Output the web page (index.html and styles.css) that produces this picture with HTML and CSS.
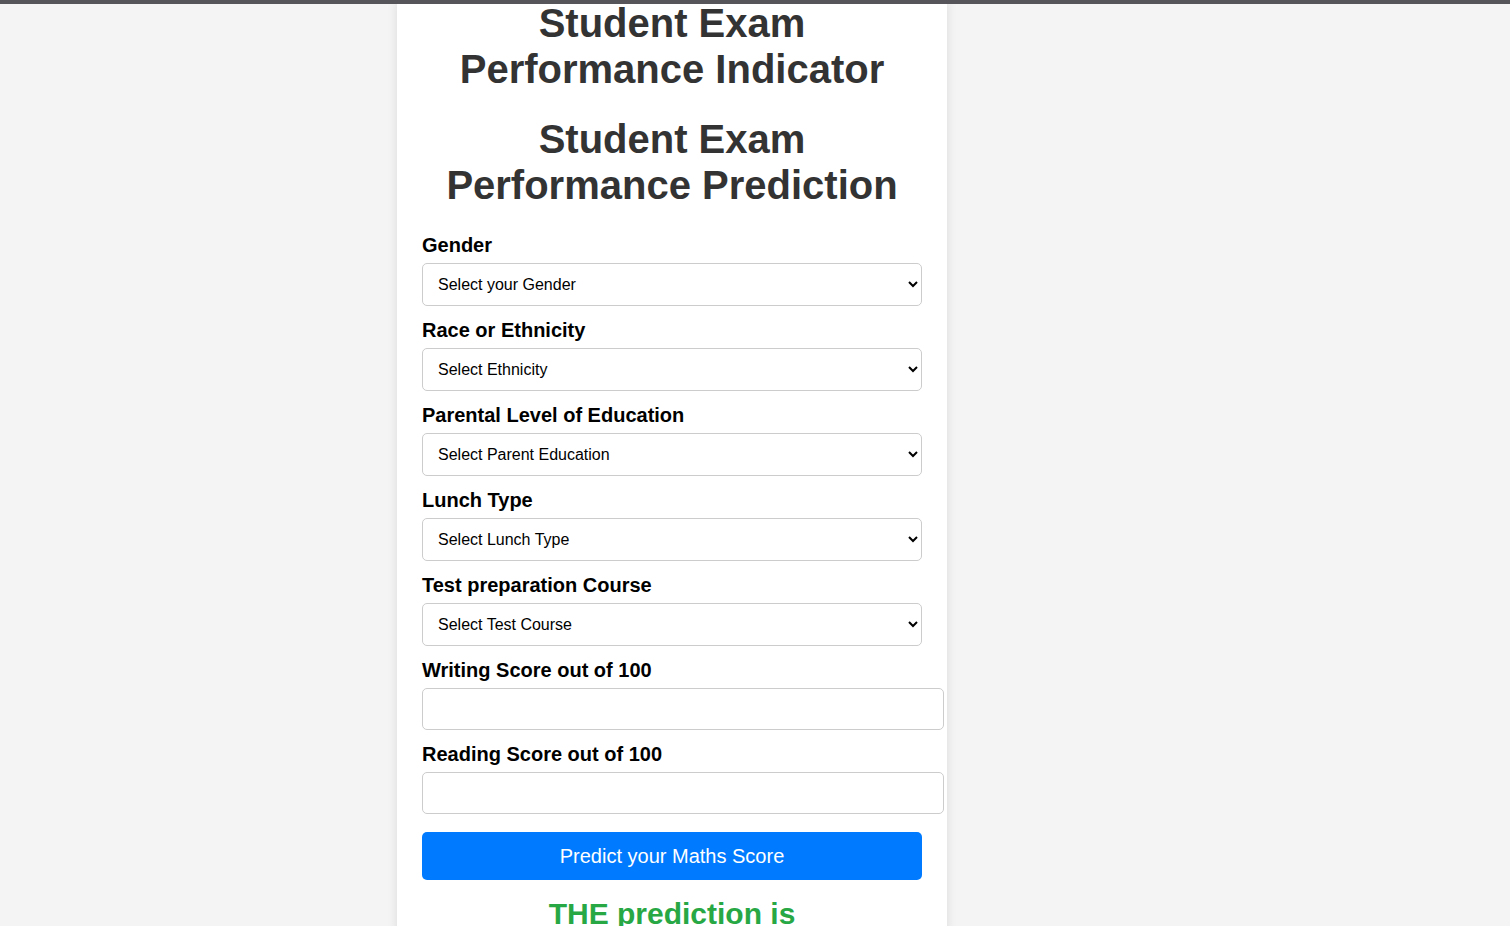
FILE: index.html
```html
<!DOCTYPE html>
<html lang="en">
<head>
<meta charset="utf-8">
<title>Student Exam Performance Indicator</title>
<link rel="stylesheet" href="styles.css">
</head>
<body>
<div class="topbar"></div>
<div class="container">
  <h1 class="title">Student Exam Performance Indicator</h1>
  <form class="form">
    <h1 class="title">Student Exam Performance Prediction</h1>
    <div class="field">
      <label class="label">Gender</label>
      <select class="control select">
        <option>Select your Gender</option>
      </select>
    </div>
    <div class="field">
      <label class="label">Race or Ethnicity</label>
      <select class="control select">
        <option>Select Ethnicity</option>
      </select>
    </div>
    <div class="field">
      <label class="label">Parental Level of Education</label>
      <select class="control select">
        <option>Select Parent Education</option>
      </select>
    </div>
    <div class="field">
      <label class="label">Lunch Type</label>
      <select class="control select">
        <option>Select Lunch Type</option>
      </select>
    </div>
    <div class="field">
      <label class="label">Test preparation Course</label>
      <select class="control select">
        <option>Select Test Course</option>
      </select>
    </div>
    <div class="field">
      <label class="label">Writing Score out of 100</label>
      <input class="control input" type="number">
    </div>
    <div class="field">
      <label class="label">Reading Score out of 100</label>
      <input class="control input" type="number">
    </div>
    <button class="btn" type="button">Predict your Maths Score</button>
  </form>
  <h2 class="result">THE prediction is</h2>
</div>
</body>
</html>
```

FILE: styles.css
```css
html, body {
  margin: 0;
  padding: 0;
}
body {
  background: #f4f4f4;
  font-family: "Liberation Sans", Arial, sans-serif;
  color: #000;
}
.topbar {
  position: fixed;
  top: 0;
  left: 0;
  right: 0;
  height: 4px;
  background: #56565a;
  z-index: 10;
}
.container {
  width: 500px;
  margin: 0 0 0 397px;
  padding: 0 25px 20px;
  background: #fff;
  box-shadow: 0 0 10px rgba(0, 0, 0, 0.1);
}
.title {
  margin: 0 0 24px;
  font-size: 40px;
  line-height: 46px;
  font-weight: bold;
  text-align: center;
  color: #333;
}
.form .title {
  margin-bottom: 25px;
}
.field {
  margin-bottom: 12px;
}
.label {
  display: block;
  font-size: 20px;
  line-height: 23px;
  font-weight: bold;
  padding-top: 1px;
  margin: 0 0 6px;
}
.control {
  font-family: "Liberation Sans", Arial, sans-serif;
  font-size: 16px;
  color: #000;
  border: 1px solid #ccc;
  border-radius: 5px;
  background: #fff;
  padding: 10px;
  width: 100%;
  margin: 0;
}
.select {
  height: 43px;
  padding-left: 11px;
}
.input {
  height: 20px;
  display: block;
}
.btn {
  display: block;
  width: 100%;
  margin-top: 18px;
  padding: 12px;
  border: 0;
  border-radius: 5px;
  background: #007bff;
  color: #fff;
  font-family: "Liberation Sans", Arial, sans-serif;
  font-size: 20px;
  line-height: 24px;
}
.result {
  margin: 16px 0 0;
  font-size: 30px;
  line-height: 35px;
  font-weight: bold;
  text-align: center;
  color: #28a745;
}
```
